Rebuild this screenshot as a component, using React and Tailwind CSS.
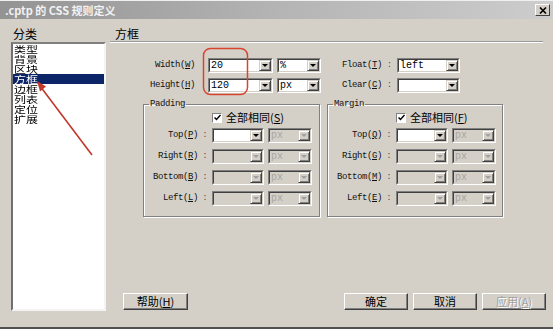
import React from 'react';

const MONO = "font-['Liberation_Mono','Noto_Sans_CJK_SC',monospace]";
const CJK = "font-['Noto_Sans_CJK_SC','Liberation_Sans',sans-serif]";

// Sunken classic frame around a combo box
const Combo = ({ w, value = '', disabled = false, dim = false }) => (
  <div className={`flex h-[15px] ${w} border border-t-[#808080] border-l-[#808080] border-b-white border-r-white`}>
    <div
      className={`flex flex-1 items-stretch border border-t-[#404040] border-l-[#404040] border-b-[#d4d0c8] border-r-[#d4d0c8] ${
        disabled ? 'bg-[#d4d0c8]' : 'bg-white'
      }`}
    >
      <span
        className={`flex-1 pl-[1px] text-[10px] leading-[11px] ${MONO} ${dim ? 'text-[#a8a5a0]' : 'text-black'}`}
      >
        {value}
      </span>
      <span className="flex w-[12px] items-center justify-center border border-t-[#d4d0c8] border-l-[#d4d0c8] border-b-[#404040] border-r-[#404040] bg-[#d4d0c8] shadow-[inset_1px_1px_0_#fff,inset_-1px_-1px_0_#808080]">
        <span
          className={`h-0 w-0 border-x-[3px] border-t-[3px] border-x-transparent ${
            disabled ? 'border-t-[#a0a0a0]' : 'border-t-black'
          }`}
        />
      </span>
    </div>
  </div>
);

const Label = ({ children, w }) => (
  <span className={`${w} shrink-0 text-right text-[9px] leading-[15px] tracking-[-0.4px] text-[#111] ${MONO}`}>
    {children}
  </span>
);

const Colon = ({ w = 'w-[14px]', show = true }) => (
  <span className={`${w} shrink-0 text-center text-[9px] leading-[15px] text-[#555] ${MONO}`}>{show ? ':' : ''}</span>
);

const Btn = ({ children, w = 'w-[65px]', disabled = false }) => (
  <div
    className={`flex h-[17px] ${w} items-center justify-center border border-t-white border-l-white border-b-[#404040] border-r-[#404040] bg-[#d4d0c8] shadow-[inset_-1px_-1px_0_#808080] text-[11px] leading-[11px] ${CJK} ${
      disabled ? 'text-[#a0a0a0] [text-shadow:1px_1px_0_#fff]' : 'text-black'
    }`}
  >
    {children}
  </div>
);

const Check = ({ text, k }) => (
  <div className="mt-[3px] flex h-[11px] items-center pl-[68px]">
    <span className="flex h-[10px] w-[10px] items-center justify-center border border-t-[#808080] border-l-[#808080] border-b-white border-r-white bg-white">
      <svg width="7" height="7" viewBox="0 0 7 7">
        <path d="M0.5 3.5 L2.5 5.5 L6.5 1" fill="none" stroke="#000" strokeWidth="1.5" />
      </svg>
    </span>
    <span className={`ml-[4px] text-[11px] leading-[11px] text-black ${CJK}`}>
      {text}(<u>{k}</u>)
    </span>
  </div>
);

const BoxRow = ({ label, k, first }) => (
  <div className={`flex h-[14px] items-center ${first ? 'mt-[5px]' : 'mt-[7px]'}`}>
    <Label w="w-[54px]">
      {label}(<u>{k}</u>)
    </Label>
    <Colon />
    <Combo w="w-[52px]" disabled={!first} />
    <div className="ml-[4px]">
      <Combo w="w-[44px]" value="px" disabled dim />
    </div>
  </div>
);

const Group = ({ title, w, checkKey, keys }) => (
  <fieldset className={`${w} h-[117px] border border-[#808080] shadow-[1px_1px_0_#fff,inset_1px_1px_0_#fff] px-0 pb-0`}>
    <legend className={`ml-[5px] px-[1px] text-[9px] leading-[9px] tracking-[-0.4px] text-[#111] ${MONO}`}>{title}</legend>
    <Check text="全部相同" k={checkKey} />
    <BoxRow label="Top" k={keys[0]} first />
    <BoxRow label="Right" k={keys[1]} />
    <BoxRow label="Bottom" k={keys[2]} />
    <BoxRow label="Left" k={keys[3]} />
  </fieldset>
);

const categories = ['类型', '背景', '区块', '方框', '边框', '列表', '定位', '扩展'];

export default function App() {
  return (
    <div className="relative flex h-[329px] w-[553px] flex-col overflow-hidden bg-[#d4d0c8] border-b-2 border-b-[#505050]">
      {/* title bar */}
      <div className="flex h-[19px] shrink-0 items-center border-t border-t-[#f0f0f0] bg-gradient-to-r from-[#939393] via-[#b4b4b4] to-[#cdcdcd] pl-[5px] pr-[3px]">
        <span className={`flex-1 text-[11px] font-bold leading-[11px] text-[#f2f2f2] ${CJK}`}>.cptp 的 CSS 规则定义</span>
        <span className="flex h-[12px] w-[15px] items-center justify-center border border-t-white border-l-white border-b-[#404040] border-r-[#404040] bg-[#d4d0c8]">
          <svg width="8" height="7" viewBox="0 0 8 7">
            <path d="M1 0.5 L7 6.5 M7 0.5 L1 6.5" stroke="#000" strokeWidth="1.6" />
          </svg>
        </span>
      </div>

      <div className="flex flex-1">
        {/* left column */}
        <div className="ml-[11px] flex w-[95px] flex-col">
          <div className={`h-[22px] pl-[2px] pt-[9px] text-[12px] leading-[12px] text-black ${CJK}`}>分类</div>
          <div className="mt-[1px] h-[269px] border-2 border-t-[#808080] border-l-[#707070] border-b-[#f4f4f4] border-r-[#f4f4f4] bg-white">
            {categories.map((c, i) => (
              <div
                key={c}
                className={`flex h-[10px] items-center pl-[1px] ${i === 3 ? 'bg-[#0c2468] text-white' : 'text-black'}`}
              >
                <span className={`inline-block origin-left scale-y-[0.78] text-[12px] leading-[10px] ${CJK}`}>{c}</span>
              </div>
            ))}
          </div>
        </div>

        {/* right column */}
        <div className="ml-[4px] flex w-[436px] flex-col">
          <div className={`h-[22px] pl-[5px] pt-[9px] text-[12px] leading-[12px] text-black ${CJK}`}>方框</div>
          <div className="mr-[3px] h-[2px] border-t border-t-[#9a9a9a] border-b border-b-white" />

          <div className="mt-[15px] flex h-[15px] items-center pl-[33px]">
            <Label w="w-[52px]">
              Width(<u>W</u>)
            </Label>
            <Colon w="w-[13px]" show={false} />
            <Combo w="w-[65px]" value="20" />
            <div className="ml-[4px]">
              <Combo w="w-[44px]" value="%" />
            </div>
            <Label w="w-[61px]">
              Float(<u>T</u>)
            </Label>
            <Colon w="w-[15px]" />
            <Combo w="w-[63px]" value="left" />
          </div>
          <div className="mt-[5px] flex h-[15px] items-center pl-[33px]">
            <Label w="w-[52px]">
              Height(<u>H</u>)
            </Label>
            <Colon w="w-[13px]" show={false} />
            <Combo w="w-[65px]" value="120" />
            <div className="ml-[4px]">
              <Combo w="w-[44px]" value="px" />
            </div>
            <Label w="w-[61px]">
              Clear(<u>C</u>)
            </Label>
            <Colon w="w-[15px]" />
            <Combo w="w-[63px]" />
          </div>

          <div className="mt-[7px] flex gap-[7px] pl-[33px]">
            <Group title="Padding" w="w-[177px]" checkKey="S" keys={['P', 'R', 'B', 'L']} />
            <Group title="Margin" w="w-[176px]" checkKey="F" keys={['Q', 'G', 'M', 'E']} />
          </div>

          <div className="mt-[76px] flex pl-[13px]">
            <Btn>
              帮助(<u>H</u>)
            </Btn>
            <div className="ml-auto flex gap-[5px]">
              <Btn w="w-[64px]">确定</Btn>
              <Btn w="w-[64px]">取消</Btn>
              <Btn w="w-[64px]" disabled>
                应用(<u>A</u>)
              </Btn>
            </div>
          </div>
        </div>
      </div>

      {/* red annotations */}
      <svg className="pointer-events-none absolute left-0 top-0" width="553" height="329">
        <rect x="203.5" y="48.5" width="44" height="46" rx="7" fill="none" stroke="#d8452f" strokeWidth="1.5" />
        <line x1="92" y1="155" x2="40" y2="86" stroke="#c0392b" strokeWidth="1.6" />
        <polygon points="37,81 46,86.5 40,91.5" fill="#c0392b" />
      </svg>
    </div>
  );
}
